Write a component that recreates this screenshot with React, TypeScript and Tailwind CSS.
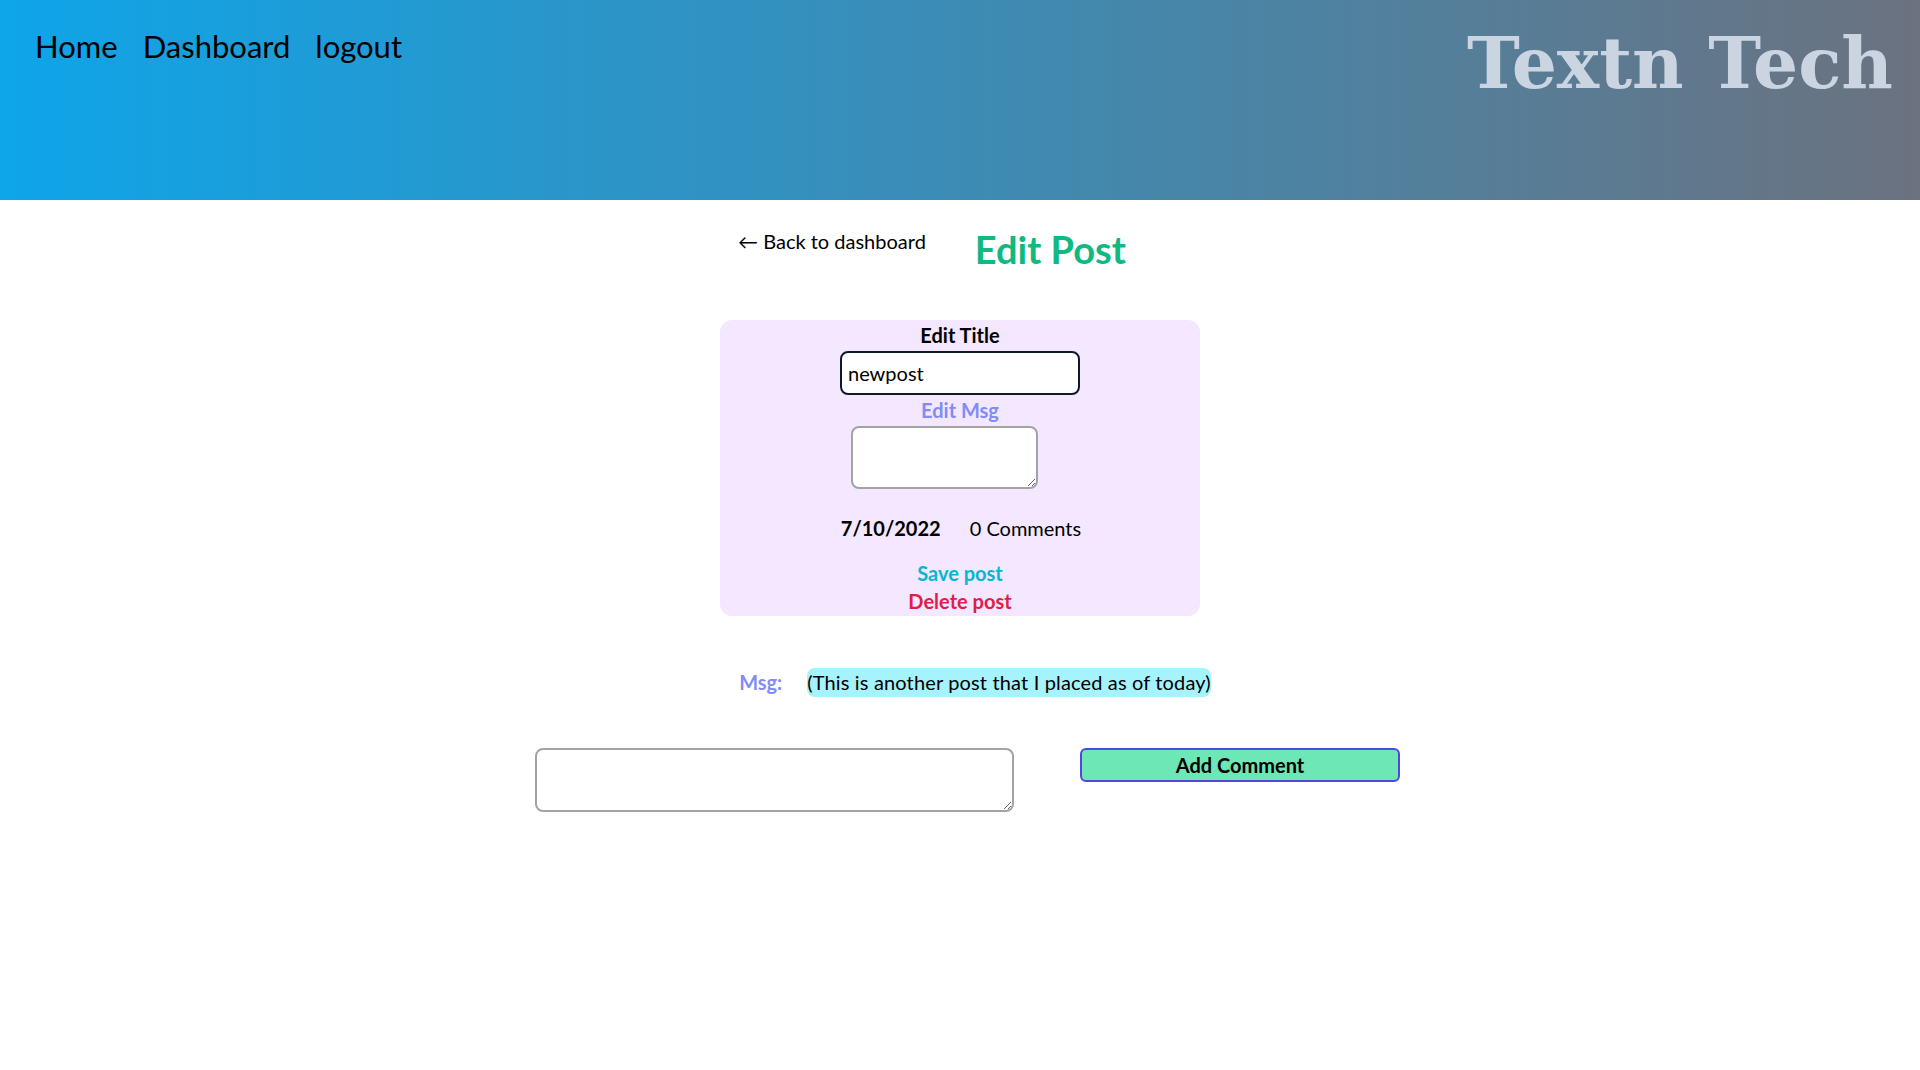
import React from "react";

export default function App() {
  const sans = { fontFamily: "Lato, 'Noto Sans', sans-serif" };
  return (
    <div className="min-h-[1070px] bg-white text-black" style={sans}>
      <header className="h-[200px] bg-linear-to-r/srgb from-[#0ea5e9] to-[#6b7280] flex justify-between items-start pl-[35px] pr-[27px] pt-[27px]">
        <nav className="flex gap-[25px] text-[31px] leading-[36px] text-black pt-[1px]">
          <a href="#">Home</a>
          <a href="#">Dashboard</a>
          <a href="#">logout</a>
        </nav>
        <h1
          className="text-[71px] leading-none font-bold text-[#cbd5e1] mt-[1px]"
          style={{ fontFamily: "'DejaVu Serif', Georgia, serif" }}
        >
          Textn Tech
        </h1>
      </header>

      <main className="flex flex-col items-center">
        <div className="flex items-start justify-center mt-[27px] mr-[6px]">
          <a href="#" className="text-[20px] leading-[28px]">← Back to dashboard</a>
          <h2 className="ml-[49px] mr-[50px] mt-[2px] text-[38px] leading-[40px] font-bold text-[#10b981]">
            Edit Post
          </h2>
        </div>

        <section className="mt-[51px] w-[480px] bg-[#f3e8ff] rounded-xl flex flex-col items-center pt-[1px] text-[20px] leading-[28px]">
          <label className="font-bold">Edit Title</label>
          <input
            defaultValue="newpost"
            className="mt-[2px] w-[240px] h-[44px] border-2 border-[#111827] rounded-lg bg-white px-[6px] text-[20px] outline-none"
          />
          <label className="mt-[1px] font-bold text-[#818cf8]">Edit Msg</label>
          <textarea className="mt-[2px] w-[187px] h-[63px] border-2 border-[#a3a3a3] rounded-lg bg-white ml-[-31px]" />
          <div className="mt-[25px] flex gap-[29px] ml-[2px]">
            <span className="font-bold">7/10/2022</span>
            <span>0 Comments</span>
          </div>
          <button className="mt-[17px] font-bold text-[#06b6d4]">Save post</button>
          <button className="font-bold text-[#e11d48] pb-[1px]">Delete post</button>
        </section>

        <div className="mt-[52px] flex items-center gap-[25px] text-[20px] leading-[29px] ml-[30px]">
          <span className="font-bold text-[#818cf8]">Msg:</span>
          <span className="bg-[#a5f3fc] rounded-lg tracking-[0.15px]">(This is another post that I placed as of today)</span>
        </div>

        <div className="mt-[51px] flex items-start gap-[66px] ml-[15px]">
          <textarea className="w-[479px] h-[64px] border-2 border-[#a3a3a3] rounded-lg bg-white" />
          <button className="w-[320px] h-[34px] bg-[#6ee7b7] border-2 border-[#4f46e5] rounded-md font-bold text-[20px] leading-[28px]">
            Add Comment
          </button>
        </div>
      </main>
    </div>
  );
}
